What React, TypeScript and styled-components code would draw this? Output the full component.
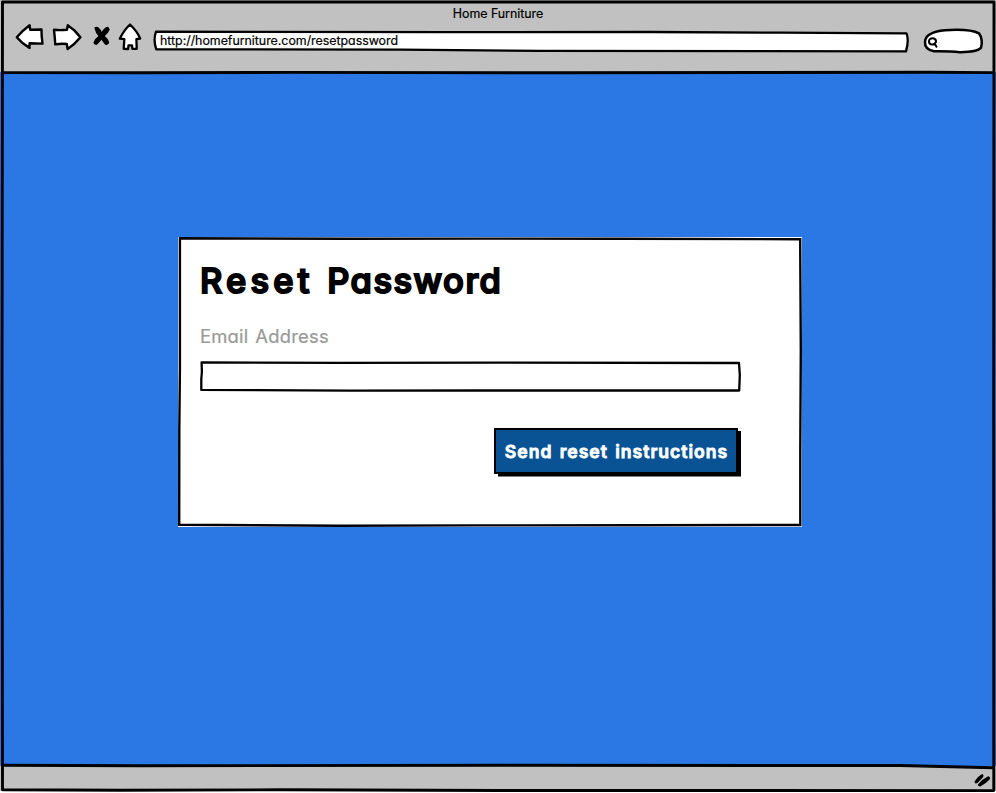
import React from "react";
import styled, { createGlobalStyle } from "styled-components";

const INK = "#000";

const GlobalStyle = createGlobalStyle`
  * { box-sizing: border-box; }
  body {
    margin: 0;
    overflow: hidden;
    font-family: Inter, "Open Sans", sans-serif;
    font-feature-settings: "cv11" 1;
    color: ${INK};
  }
`;

const BrowserWindow = styled.div`
  position: relative;
  display: grid;
  grid-template-rows: 72px 694px 25px;
  width: 996px;
  height: 793px;
  background: #fff;
`;

const Chrome = styled.header`
  display: flex;
  flex-direction: column;
  background: #c1c1c1;
`;

const WindowTitle = styled.div`
  height: 24px;
  padding: 4px 0 0 0;
  font-size: 12.4px;
  line-height: 19px;
  text-align: center;
  letter-spacing: -0.02px;
  -webkit-text-stroke: 0.2px ${INK};
`;

const Toolbar = styled.nav`
  display: flex;
  height: 30px;
  padding-left: 15px;
`;

const ToolButton = styled.button<{ $width: number; $gap: number }>`
  width: ${(p) => p.$width}px;
  height: 27px;
  margin: 0 ${(p) => p.$gap}px 0 0;
  padding: 0;
  border: 0;
  background: none;
`;

const Drawing = styled.svg`
  display: block;
  width: 100%;
  height: 100%;
  overflow: visible;
  stroke: ${INK};
  stroke-linecap: round;
  stroke-linejoin: round;
`;

const Outline = styled(Drawing)`
  position: absolute;
  inset: 0;
  pointer-events: none;
`;

const AddressBar = styled.div`
  position: relative;
  width: 756px;
  height: 22px;
  margin: 6px 14px 0 0;
  padding-left: 7px;
`;

const Address = styled.span`
  position: relative;
  display: block;
  font-size: 12.4px;
  line-height: 21px;
  letter-spacing: -0.02px;
  -webkit-text-stroke: 0.2px ${INK};
  white-space: nowrap;
`;

const SearchBox = styled.div`
  width: 60px;
  height: 24px;
  margin-top: 5px;
`;

const Page = styled.main`
  display: flex;
  align-items: flex-start;
  padding: 165px 0 0 178px;
  background: #2b78e4;
`;

const Card = styled.section`
  position: relative;
  width: 624px;
  height: 290px;
  padding: 22px 61px 0 22px;
  background: #fff;
`;

const Heading = styled.h1`
  margin: 0;
  font-size: 34.5px;
  line-height: 44px;
  font-weight: 500;
  white-space: nowrap;
  -webkit-text-stroke: 2px ${INK};
`;

const Word = styled.span<{ $tracking: number }>`
  letter-spacing: ${(p) => p.$tracking}px;
`;

const Label = styled.label`
  display: block;
  height: 24px;
  margin-top: 21px;
  color: #999;
  font-size: 18.4px;
  line-height: 24px;
  letter-spacing: 0.22px;
  word-spacing: 1.5px;
  -webkit-text-stroke: 0.2px #999;
  white-space: nowrap;
`;

const Field = styled.div`
  position: relative;
  width: 541px;
  height: 31px;
  margin-top: 13px;
`;

const Input = styled.input`
  width: 100%;
  height: 100%;
  padding: 0 8px;
  border: 0;
  outline: 0;
  background: transparent;
  font: inherit;
`;

const Actions = styled.div`
  display: flex;
  justify-content: flex-end;
  width: 538px;
  margin-top: 36px;
`;

const SubmitButton = styled.button`
  width: 244px;
  height: 46px;
  padding: 1px 0 0 1px;
  border: 2px solid ${INK};
  background: #095394;
  box-shadow: 3px 2.5px 0 ${INK};
  clip-path: polygon(0 0, 100% 0, 100% 3px, 247px 3px, 247px 49px, 4px 49px, 4px 46px, 0 46px);
  color: #fff;
  font: 600 17.6px/41px Inter, sans-serif;
  font-feature-settings: "cv11" 1;
  letter-spacing: 0.97px;
  word-spacing: 2px;
  -webkit-text-stroke: 0.8px #fff;
  white-space: nowrap;
`;

const StatusBar = styled.footer`
  display: flex;
  justify-content: flex-end;
  padding: 9px 5px 0 0;
  background: #c1c1c1;
`;

const Grip = styled.span`
  width: 17px;
  height: 13px;
`;

export default function App() {
  return (
    <>
      <GlobalStyle />
      <BrowserWindow>
        <Chrome>
          <WindowTitle>Home Furniture</WindowTitle>
          <Toolbar>
            <ToolButton $width={29} $gap={8} aria-label="Back">
              <Drawing viewBox="15 24 29 27" fill="#fff" strokeWidth="2.4">
                <path d="M16.8 37.2Q22 31 29.6 25.3L30.2 29.8L41.5 29.5Q41.4 36 42.5 43.6Q36 43.6 29.6 43.2L29.5 47.9Q22 43.5 16.8 37.2Z" />
              </Drawing>
            </ToolButton>
            <ToolButton $width={30} $gap={10} aria-label="Forward">
              <Drawing viewBox="52 24 30 27" fill="#fff" strokeWidth="2.4">
                <path d="M54 29.8Q60 30.4 67 29.8L67.8 25.3Q75 30 80.4 37.2Q75 44 67.6 49.1L66.8 44Q61 43.2 55.3 44.4Q54.8 37 54 29.8Z" />
              </Drawing>
            </ToolButton>
            <ToolButton $width={19} $gap={7} aria-label="Stop">
              <Drawing viewBox="92 24 19 27" fill={INK} strokeWidth="1.1">
                <path d="M95 27.8Q98.6 26 101.8 33Q104.5 28 107.8 27.4L109.2 29.6Q107.8 33 103.8 36.2Q107.5 38 108.6 42.7Q107 45.3 105 43.8L101.5 39L96.8 44.2Q94.5 44.7 94 42.7Q95.5 38.5 99.2 36.2Q96 33 95 27.8Z" />
              </Drawing>
            </ToolButton>
            <ToolButton $width={24} $gap={11} aria-label="Home">
              <Drawing viewBox="118 24 24 27" fill="#fff" strokeWidth="2.3">
                <path d="M130 24.5Q137 31 140.2 38.5L136.4 39.2L136.7 48.9L132.4 48.8L132 45.3L128.5 45.3L128.2 49L123.7 48.8L124.3 39.2L119.8 38.7Q124 30 130 24.5Z" />
              </Drawing>
            </ToolButton>
            <AddressBar>
              <Outline viewBox="153 30 756 22" fill="#fff" strokeWidth="2.3">
                <path d="M156 31.6L450 32.2L650 32L780 32.7L906.5 33.4Q909.2 40 906 51.4L540 50.8L400 49.7L156.3 49.3Q153 40 156 31.6Z" />
              </Outline>
              <Address>http://homefurniture.com/resetpassword</Address>
            </AddressBar>
            <SearchBox>
              <Drawing viewBox="923 29 60 24" fill="#fff" strokeWidth="2.5">
                <path d="M925 41.8C925.4 34 934 31.2 945 30.2C958 29.4 973 30.2 979 33.4C982 37 982.4 44 981 47.7C978 51.5 969 51.8 960 52.2C950 51 941 51.1 934 51.2C928 50 924.6 47 925 41.8Z" />
                <path d="M936 42C936.4 37.6 929.4 37 929 41C928.7 45.2 934 45.8 936 42ZM934.8 43.8L936.5 46.7" strokeWidth="2" />
              </Drawing>
            </SearchBox>
          </Toolbar>
        </Chrome>
        <Page>
          <Card>
            <Outline viewBox="178 237 624 290" fill="none" strokeWidth="2.4">
              <path
                strokeLinejoin="miter"
                d="M179.9 238.2L350 238.8L480 238.6L620 238.8L800.2 239.2L800.8 350L800.3 450L800.3 525L640 525.3L480 525.4L340 525.8L179.2 524.7L179.3 430L179.9 370Z"
              />
            </Outline>
            <Heading>
              <Word $tracking={4.2}>Reset </Word>
              <Word $tracking={1.5}>Password</Word>
            </Heading>
            <Label htmlFor="email">Email Address</Label>
            <Field>
              <Outline viewBox="200 361 541 31" fill="none" strokeWidth="2.3">
                <path d="M201.6 362.5L340 362.9L500 362.6L739 363L739.8 375L739.2 390.5L620 390.5L480 390.5L350 390.7L201.3 389.9L201.3 379L201.9 372Z" />
              </Outline>
              <Input id="email" type="email" />
            </Field>
            <Actions>
              <SubmitButton>Send reset instructions</SubmitButton>
            </Actions>
          </Card>
        </Page>
        <StatusBar>
          <Grip>
            <Drawing viewBox="974 775 17 13" fill={INK} strokeWidth="1.4">
              <path d="M975.3 781.5Q978 777 982.1 774.8Q983.3 775.5 982.5 776.7L977 782.4Q975.2 783.5 975.3 781.5ZM978.5 785Q983 779.5 988.5 777Q989.8 777.7 989.1 778.9Q985 783.2 980 785.8Z" />
            </Drawing>
          </Grip>
        </StatusBar>
        <Outline viewBox="0 0 996 793" fill="none" strokeWidth="2.9">
          <path d="M2.5 2L994 2L993.7 400L993.8 790.6L500 790.5L280 789.8L120 790.2L2.5 789.7L2 400Z" />
          <path d="M3 72.6L140 72.8L290 72.4L560 72.8L930 72.3L993 72.6M3 765.2L140 765.8L500 765.3L900 765.5L993 767.8" />
        </Outline>
      </BrowserWindow>
    </>
  );
}
